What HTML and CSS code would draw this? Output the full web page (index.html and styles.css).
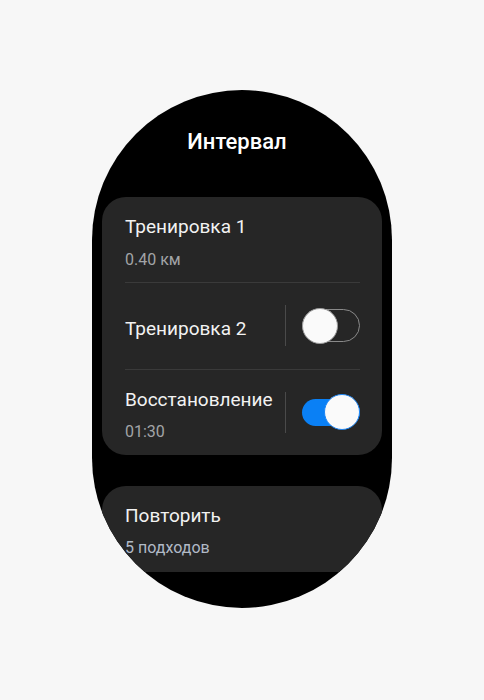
FILE: index.html
```html
<!DOCTYPE html>
<html lang="ru">
<head>
<meta charset="utf-8">
<link rel="stylesheet" href="styles.css">
</head>
<body>
<div class="watch">
  <div class="title">Интервал</div>
  <div class="list">
    <div class="card">
      <div class="row row-first">
        <div class="text">
          <div class="label">Тренировка 1</div>
          <div class="sub">0.40 км</div>
        </div>
      </div>
      <div class="divider"></div>
      <div class="row row-mid">
        <div class="text text-single">
          <div class="label">Тренировка 2</div>
        </div>
        <div class="vsep"></div>
        <div class="toggle off"><div class="knob"></div></div>
      </div>
      <div class="divider"></div>
      <div class="row row-last">
        <div class="text">
          <div class="label">Восстановление</div>
          <div class="sub">01:30</div>
        </div>
        <div class="vsep"></div>
        <div class="toggle on"><div class="knob"></div></div>
      </div>
    </div>
    <div class="card card-repeat">
      <div class="row row-first">
        <div class="text">
          <div class="label">Повторить</div>
          <div class="sub sub-blue">5 подходов</div>
        </div>
      </div>
    </div>
  </div>
</div>
</body>
</html>
```

FILE: styles.css
```css
html, body {
  margin: 0;
  padding: 0;
  background: #f7f7f7;
}
body {
  font-family: Roboto, "Noto Sans", "DejaVu Sans", sans-serif;
}
.watch {
  width: 300px;
  height: 518px;
  margin: 90px auto 0;
  background: #000;
  border-radius: 150px;
  overflow: hidden;
  display: flex;
  flex-direction: column;
  align-items: stretch;
}
.title {
  margin-top: 39px;
  padding-right: 10px;
  height: 26px;
  line-height: 26px;
  font-size: 22px;
  font-weight: 500;
  color: #fff;
  text-align: center;
}
.list {
  margin-top: 42px;
  height: 375px;
  overflow: hidden;
  display: flex;
  flex-direction: column;
  gap: 31px;
  padding: 0 10px;
}
.card {
  background: #262626;
  border-radius: 24px;
  padding: 0 22px 0 23px;
  flex-shrink: 0;
}
.row {
  display: flex;
  align-items: center;
}
.row-first {
  padding-top: 19px;
  padding-bottom: 13px;
  align-items: flex-start;
}
.row-mid {
  height: 86px;
}
.row-last {
  height: 85px;
}
.text {
  flex: 1;
  min-width: 0;
  padding-top: 6px;
}
.row-first .text {
  padding-top: 0;
}
.label {
  font-size: 19px;
  line-height: 22px;
  color: #f2f2f2;
  white-space: nowrap;
}
.sub {
  margin-top: 12.5px;
  font-size: 16px;
  line-height: 18px;
  color: #a2a4a7;
}
.sub-blue {
  color: #b1bac6;
}
.card-repeat .row-first {
  padding-bottom: 40px;
}
.divider {
  height: 1px;
  background: #3a3a3a;
}
.vsep {
  width: 1.5px;
  height: 41px;
  background: #4a4a4a;
  margin-right: 16px;
  flex-shrink: 0;
}
.toggle {
  position: relative;
  width: 58px;
  height: 36px;
  flex-shrink: 0;
  display: flex;
  align-items: center;
}
.toggle::before {
  content: "";
  display: block;
  width: 100%;
  box-sizing: border-box;
  border-radius: 20px;
}
.toggle.off::before {
  height: 33px;
  border: 1.5px solid #8a8a8a;
}
.toggle.on::before {
  height: 27px;
  background: #0a80f5;
}
.knob {
  position: absolute;
  top: 0;
  width: 36px;
  height: 36px;
  box-sizing: border-box;
  border-radius: 50%;
  background: #fafafa;
}
.toggle.off .knob {
  left: 0;
  border: 1.5px solid #9a9a9a;
}
.toggle.on .knob {
  right: 0;
  border: 1.5px solid #1a84f5;
}
```
